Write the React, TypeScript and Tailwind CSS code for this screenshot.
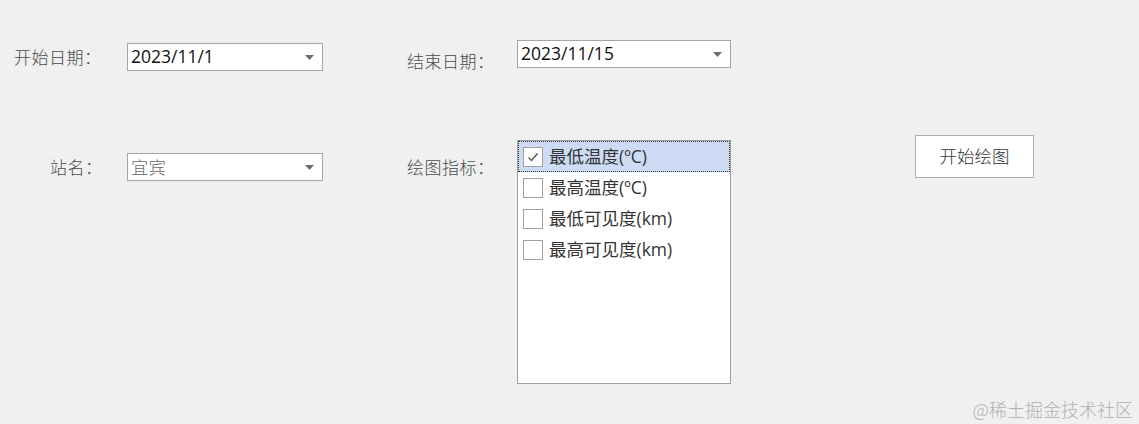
import React from "react";

const cjk = { fontFamily: '"Noto Sans CJK SC", sans-serif' };
const mixed = { fontFamily: '"Open Sans", "Noto Sans CJK SC", sans-serif' };

function Arrow() {
  return (
    <svg width="9" height="5" viewBox="0 0 9 5" className="shrink-0">
      <path d="M0 0 L9 0 L4.5 5 Z" fill="#6b6b6b" />
    </svg>
  );
}

function Combo({ value, w, h, gray }: { value: string; w: string; h: string; gray?: boolean }) {
  return (
    <div
      className={`${w} ${h} bg-white border border-[#a5a5a5] flex items-center pl-[3px] pr-[8px] justify-between`}
    >
      <span
        className={`leading-none ${gray ? "text-[17.5px] text-[#6a6a6a] font-light" : "text-[17.5px] text-[#111]"}`}
        style={gray ? cjk : mixed}
      >
        {value}
      </span>
      <Arrow />
    </div>
  );
}

function Label({ text, cls }: { text: string; cls: string }) {
  return (
    <div className={`${cls} text-[17px] leading-[24px] text-[#4a4a4a] font-light tracking-[0.5px]`} style={cjk}>
      {text}
    </div>
  );
}

function CheckRow({ text, checked, selected }: { text: string; checked?: boolean; selected?: boolean }) {
  return (
    <div
      className={`h-[31px] flex items-center pl-[4px] ${
        selected ? "bg-[#cddcf4] border border-dotted border-[#333]" : "border border-transparent"
      }`}
    >
      <div className="w-[20px] h-[20px] bg-white border border-[#a0a0a0] flex items-center justify-center shrink-0">
        {checked && (
          <svg width="14" height="14" viewBox="0 0 14 14">
            <path d="M2.5 7.5 L5.5 10.5 L11.5 3.5" fill="none" stroke="#555" strokeWidth="1.4" />
          </svg>
        )}
      </div>
      <span className="ml-[6px] text-[17.5px] leading-none text-[#333]" style={mixed}>
        {text}
      </span>
    </div>
  );
}

export default function App() {
  return (
    <div className="w-[1139px] h-[424px] bg-[#f0f0f0] relative overflow-hidden">
      <div className="flex items-start pt-[40px]">
        <Label text="开始日期：" cls="ml-[14px] mt-[5px] w-[113px]" />
        <div className="mt-[3px]">
          <Combo value="2023/11/1" w="w-[196px]" h="h-[28px]" />
        </div>
        <Label text="结束日期：" cls="ml-[84px] mt-[9px] w-[110px]" />
        <Combo value="2023/11/15" w="w-[214px]" h="h-[28px]" />
      </div>

      <div className="flex items-start mt-[62px]">
        <Label text="站名：" cls="ml-[50px] mt-[20px] w-[77px]" />
        <div className="mt-[18px]">
          <Combo value="宜宾" w="w-[196px]" h="h-[28px]" gray />
        </div>
        <Label text="绘图指标：" cls="ml-[84px] mt-[20px] w-[110px]" />
        <div className="mt-[5px] w-[214px] h-[244px] bg-white border border-[#a0a0a0]">
          <CheckRow text="最低温度(ºC)" checked selected />
          <CheckRow text="最高温度(ºC)" />
          <CheckRow text="最低可见度(km)" />
          <CheckRow text="最高可见度(km)" />
        </div>
        <button
          className="ml-[184px] w-[119px] h-[43px] bg-white border border-[#adadad] text-[17.5px] text-[#333] font-light"
          style={cjk}
        >
          开始绘图
        </button>
      </div>

      <div
        className="absolute right-[6px] bottom-[6px] text-[18px] leading-none text-[#b0b0b0] font-light"
        style={cjk}
      >
        @稀土掘金技术社区
      </div>
    </div>
  );
}
